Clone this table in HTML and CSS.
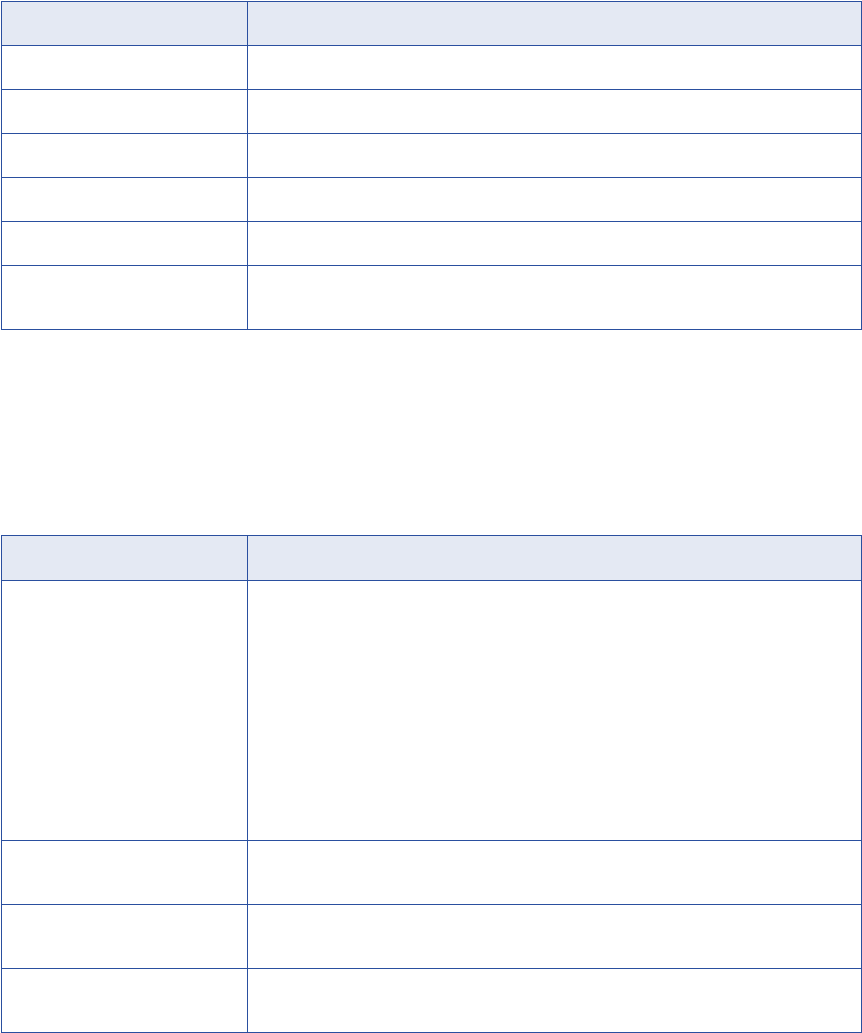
FILE: index.html
```html
<!DOCTYPE html>
<html lang="en">
<head>
    <meta charset="UTF-8">
    <meta name="viewport" content="width=device-width, initial-scale=1.0">
    <title>Tables</title>
    <link rel="stylesheet" href="styles.css">
</head>
<body>
    <div class="page">
        <table class="grid-table">
            <thead>
                <tr>
                    <th class="col-name"></th>
                    <th></th>
                </tr>
            </thead>
            <tbody>
                <tr><td></td><td></td></tr>
                <tr><td></td><td></td></tr>
                <tr><td></td><td></td></tr>
                <tr><td></td><td></td></tr>
                <tr><td></td><td></td></tr>
                <tr class="row-double"><td></td><td></td></tr>
            </tbody>
        </table>

        <table class="grid-table second">
            <thead>
                <tr>
                    <th class="col-name"></th>
                    <th></th>
                </tr>
            </thead>
            <tbody>
                <tr class="row-tall"><td></td><td></td></tr>
                <tr class="row-double"><td></td><td></td></tr>
                <tr class="row-double"><td></td><td></td></tr>
                <tr class="row-double"><td></td><td></td></tr>
            </tbody>
        </table>
    </div>
</body>
</html>
```

FILE: styles.css
```css
body {
    margin: 0;
    font-family: 'Liberation Sans', Arial, sans-serif;
    background-color: #ffffff;
}

.page {
    padding: 1px 0 0 1px;
}

.grid-table {
    width: 861px;
    border-collapse: collapse;
    table-layout: fixed;
}

.grid-table th,
.grid-table td {
    border: 1px solid #2a4f9f;
    padding: 0;
}

.grid-table th {
    background-color: #e4e9f3;
}

.col-name {
    width: 245px;
}

.grid-table tr {
    height: 44px;
}

.grid-table tr.row-double {
    height: 64px;
}

.grid-table tr.row-tall {
    height: 260px;
}

.second {
    margin-top: 205px;
}

.second thead tr {
    height: 45px;
}
```
